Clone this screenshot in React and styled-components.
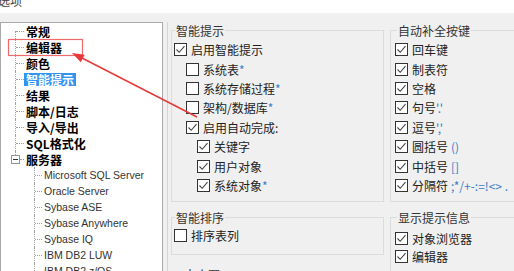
import React from 'react';
import styled, { createGlobalStyle } from 'styled-components';

const GlobalStyle = createGlobalStyle`
  html, body {
    margin: 0;
    padding: 0;
  }
  body {
    background: #f0f0f0;
    overflow: hidden;
    font-family: "Noto Sans CJK SC", "Liberation Sans", sans-serif;
  }
`;

const Window = styled.div`
  position: relative;
  width: 514px;
  height: 271px;
  overflow: hidden;
  background: #f0f0f0;
`;

const TitleBar = styled.div`
  height: 13px;
  background: #fff;
  overflow: hidden;
`;

const TitleText = styled.div`
  font-size: 12px;
  line-height: 14px;
  margin: -6px 0 0 -2px;
  color: #444;
`;

const Body = styled.div`
  display: flex;
  align-items: stretch;
  gap: 4px;
  padding-top: 9px;
  height: 260px;
`;

/* ---------- tree ---------- */

const Tree = styled.div`
  width: 161px;
  flex-shrink: 0;
  background: #fff;
  border: 1px solid #aaaaaa;
  border-bottom: none;
`;

const TreeRow = styled.div`
  display: flex;
  align-items: center;
  height: 16px;
`;

const Guide = styled.span`
  position: relative;
  align-self: stretch;
  flex-shrink: 0;
  width: ${p => p.$w}px;
  margin-left: ${p => p.$indent}px;
  &::before {
    content: '';
    position: absolute;
    left: 0;
    top: ${p => (p.$first ? '50%' : '0')};
    bottom: ${p => (p.$last ? '50%' : '0')};
    border-left: 1px dotted #a0a0a0;
  }
  &::after {
    content: '';
    position: absolute;
    left: 1px;
    right: 0;
    top: 50%;
    border-top: 1px dotted #a0a0a0;
  }
`;

const ExpanderCell = styled.span`
  position: relative;
  align-self: stretch;
  flex-shrink: 0;
  width: 9px;
  margin-left: 14px;
  &::before {
    content: '';
    position: absolute;
    left: 0;
    top: 0;
    height: 4px;
    border-left: 1px dotted #a0a0a0;
  }
  &::after {
    content: '';
    position: absolute;
    left: 5px;
    right: 0;
    top: 50%;
    border-top: 1px dotted #a0a0a0;
  }
`;

const Expander = styled.span`
  position: absolute;
  left: -4px;
  top: 4px;
  width: 7px;
  height: 7px;
  border: 1px solid #949494;
  background: #fff;
  &::after {
    content: '';
    position: absolute;
    left: 1px;
    right: 1px;
    top: 3px;
    border-top: 1px solid #333;
  }
`;

const NodeLabel = styled.span`
  font-size: ${p => (p.$bold ? '12px' : '10.5px')};
  font-weight: ${p => (p.$bold ? 700 : 400)};
  font-family: ${p =>
    p.$bold
      ? '"Noto Sans CJK SC", sans-serif'
      : '"Liberation Sans", "Noto Sans CJK SC", sans-serif'};
  line-height: 13px;
  height: 13px;
  padding: 0 2px;
  white-space: nowrap;
  color: ${p => (p.$selected ? '#fff' : p.$bold ? '#000' : '#333')};
  background: ${p => (p.$selected ? '#3393f0' : 'transparent')};
`;

/* ---------- option panel ---------- */

const Panel = styled.div`
  flex: 1;
  display: flex;
  align-items: flex-start;
  gap: 6px;
  padding: 2px 0 0 3px;
  border-left: 1px solid #d6d6d6;
`;

const Column = styled.div`
  display: flex;
  flex-direction: column;
  gap: 9px;
  width: ${p => p.$w}px;
  flex-shrink: 0;
`;

const Group = styled.fieldset`
  margin: ${p => p.$mt || 0}px 0 0;
  min-width: 0;
  border: 1px solid #dcdcdc;
  padding: ${p => p.$pt}px 4px ${p => p.$pb}px ${p => p.$pl}px;
`;

const Legend = styled.legend`
  font-size: 12px;
  line-height: 13px;
  color: #333;
  padding: 0 1px;
  margin-left: ${p => p.$ml}px;
  white-space: nowrap;
`;

const CheckRow = styled.label`
  display: flex;
  align-items: center;
  height: ${p => p.$h || 19.4}px;
  padding-left: ${p => p.$indent || 0}px;
  font-size: 12px;
  color: #222;
  white-space: nowrap;
`;

const Box = styled.span`
  width: 11px;
  height: 11px;
  flex-shrink: 0;
  margin-right: 4px;
  border: 1px solid #333;
  background: #fff;
  display: flex;
  align-items: center;
  justify-content: center;
`;

const Hint = styled.span`
  color: #3c7cc8;
  margin-left: ${p => p.$gap || 0}px;
`;

const Annotation = styled.svg`
  position: absolute;
  left: 0;
  top: 0;
  pointer-events: none;
`;

const Check = ({ checked, indent, h, children }) => (
  <CheckRow $indent={indent} $h={h}>
    <Box>
      {checked && (
        <svg width="11" height="11" viewBox="0 0 11 11">
          <polyline points="1.5,5.5 4.2,8.3 9.5,2.2" fill="none" stroke="#444" strokeWidth="1.1" />
        </svg>
      )}
    </Box>
    {children}
  </CheckRow>
);

const topNodes = ['常规', '编辑器', '颜色', '智能提示', '结果', '脚本/日志', '导入/导出', 'SQL格式化'];
const servers = [
  'Microsoft SQL Server',
  'Oracle Server',
  'Sybase ASE',
  'Sybase Anywhere',
  'Sybase IQ',
  'IBM DB2 LUW',
  'IBM DB2 z/OS',
];

export default function App() {
  return (
    <Window>
      <GlobalStyle />
      <TitleBar>
        <TitleText>选项</TitleText>
      </TitleBar>
      <Body>
        <Tree>
          {topNodes.map((name, i) => (
            <TreeRow key={name}>
              <Guide $indent={14} $w={9} $first={i === 0} />
              <NodeLabel $bold $selected={name === '智能提示'}>{name}</NodeLabel>
            </TreeRow>
          ))}
          <TreeRow>
            <ExpanderCell>
              <Expander />
            </ExpanderCell>
            <NodeLabel $bold>服务器</NodeLabel>
          </TreeRow>
          {servers.map(name => (
            <TreeRow key={name}>
              <Guide $indent={33} $w={8} />
              <NodeLabel>{name}</NodeLabel>
            </TreeRow>
          ))}
        </Tree>

        <Panel>
          <Column $w={213}>
            <Group $pt={3} $pb={6} $pl={2}>
              <Legend $ml={1}>智能提示</Legend>
              <Check checked>启用智能提示</Check>
              <Check indent={12}>系统表<Hint>*</Hint></Check>
              <Check indent={12}>系统存储过程<Hint>*</Hint></Check>
              <Check indent={12}>架构/数据库<Hint>*</Hint></Check>
              <Check checked indent={12}>启用自动完成:</Check>
              <Check checked indent={23}>关键字</Check>
              <Check checked indent={23}>用户对象</Check>
              <Check checked indent={23}>系统对象<Hint>*</Hint></Check>
            </Group>
            <Group $pt={2} $pb={8} $pl={2}>
              <Legend $ml={1}>智能排序</Legend>
              <Check>排序表列</Check>
            </Group>
            <Group $mt={4} $pt={2} $pb={8} $pl={6}>
              <Legend $ml={5}>大小写</Legend>
              <Check>关键字大写</Check>
            </Group>
          </Column>

          <Column $w={160}>
            <Group $pt={3} $pb={6} $pl={4}>
              <Legend $ml={2}>自动补全按键</Legend>
              <Check checked>回车键</Check>
              <Check checked>制表符</Check>
              <Check checked>空格</Check>
              <Check checked>句号<Hint>'.'</Hint></Check>
              <Check checked>逗号<Hint>','</Hint></Check>
              <Check checked>圆括号<Hint $gap={3}>()</Hint></Check>
              <Check checked>中括号<Hint $gap={3}>[]</Hint></Check>
              <Check checked>分隔符<Hint $gap={3}>;*/+-:=!&lt;&gt; .</Hint></Check>
            </Group>
            <Group $pt={5} $pb={8} $pl={4}>
              <Legend $ml={2}>显示提示信息</Legend>
              <Check checked h={18}>对象浏览器</Check>
              <Check checked h={18}>编辑器</Check>
            </Group>
          </Column>
        </Panel>
      </Body>

      <Annotation width="514" height="271" viewBox="0 0 514 271">
        <rect x="8.5" y="39.5" width="74" height="16" fill="none" stroke="#ef6b6b" strokeWidth="1.2" />
        <line x1="81" y1="57.5" x2="197" y2="117" stroke="#e8393b" strokeWidth="1.5" />
        <polygon points="72,53 84.6,54.8 80.8,62.2" fill="#e8393b" />
      </Annotation>
    </Window>
  );
}
